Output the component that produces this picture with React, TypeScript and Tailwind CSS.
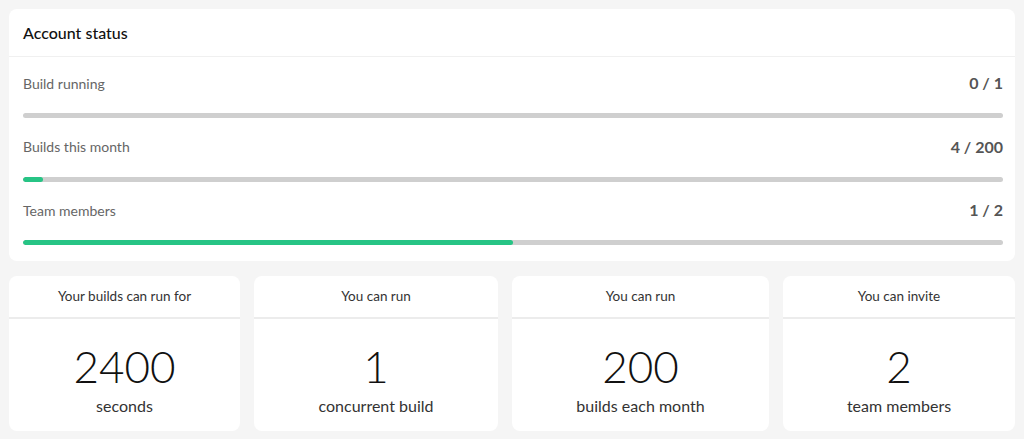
import React from 'react';

type Usage = { label: string; used: number; total: number };

const usage: Usage[] = [
  { label: 'Build running', used: 0, total: 1 },
  { label: 'Builds this month', used: 4, total: 200 },
  { label: 'Team members', used: 1, total: 2 },
];

const limits = [
  { head: 'Your builds can run for', value: '2400', unit: 'seconds' },
  { head: 'You can run', value: '1', unit: 'concurrent build' },
  { head: 'You can run', value: '200', unit: 'builds each month' },
  { head: 'You can invite', value: '2', unit: 'team members' },
];

function UsageRow({ item }: { item: Usage }) {
  const pct = (item.used / item.total) * 100;
  return (
    <div>
      <div className="flex h-5 items-center justify-between">
        <span className="text-[14px] text-[#666]">{item.label}</span>
        <span className="text-[16px] font-bold text-[#555]">
          {item.used} / {item.total}
        </span>
      </div>
      <div className="mt-5 h-[5px] overflow-hidden rounded-full bg-[#cfcfcf]">
        <div className="h-full rounded-full bg-[#27c485]" style={{ width: `${pct}%` }} />
      </div>
    </div>
  );
}

function LimitCard({ head, value, unit }: { head: string; value: string; unit: string }) {
  return (
    <div className="flex flex-col rounded-lg bg-white text-center">
      <div className="flex h-[43px] items-center justify-center border-b-2 border-[#ececec] text-[13.5px] text-[#333]">
        {head}
      </div>
      <div className="flex flex-col items-center pt-[19px] pb-[13px]">
        <span className="text-[44px] leading-[56px] font-light text-[#111]">{value}</span>
        <span className="text-[16px] leading-6 text-[#333]">{unit}</span>
      </div>
    </div>
  );
}

export default function App() {
  return (
    <div
      className="min-h-[439px] bg-[#f5f5f5] p-[9px]"
      style={{ fontFamily: 'Lato, "Open Sans", sans-serif' }}
    >
      <div className="rounded-lg bg-white">
        <div className="flex h-12 items-center border-b border-[#f0f0f0] px-[14px] text-[16px] font-medium text-[#111]">
          Account status
        </div>
        <div className="flex flex-col gap-[18.5px] pt-[16px] pr-[12px] pb-4 pl-[14px]">
          {usage.map((u) => (
            <UsageRow key={u.label} item={u} />
          ))}
        </div>
      </div>
      <div className="mt-[15px] grid grid-cols-[231px_244px_257px_232px] gap-[14px]">
        {limits.map((l, i) => (
          <LimitCard key={i} {...l} />
        ))}
      </div>
    </div>
  );
}
